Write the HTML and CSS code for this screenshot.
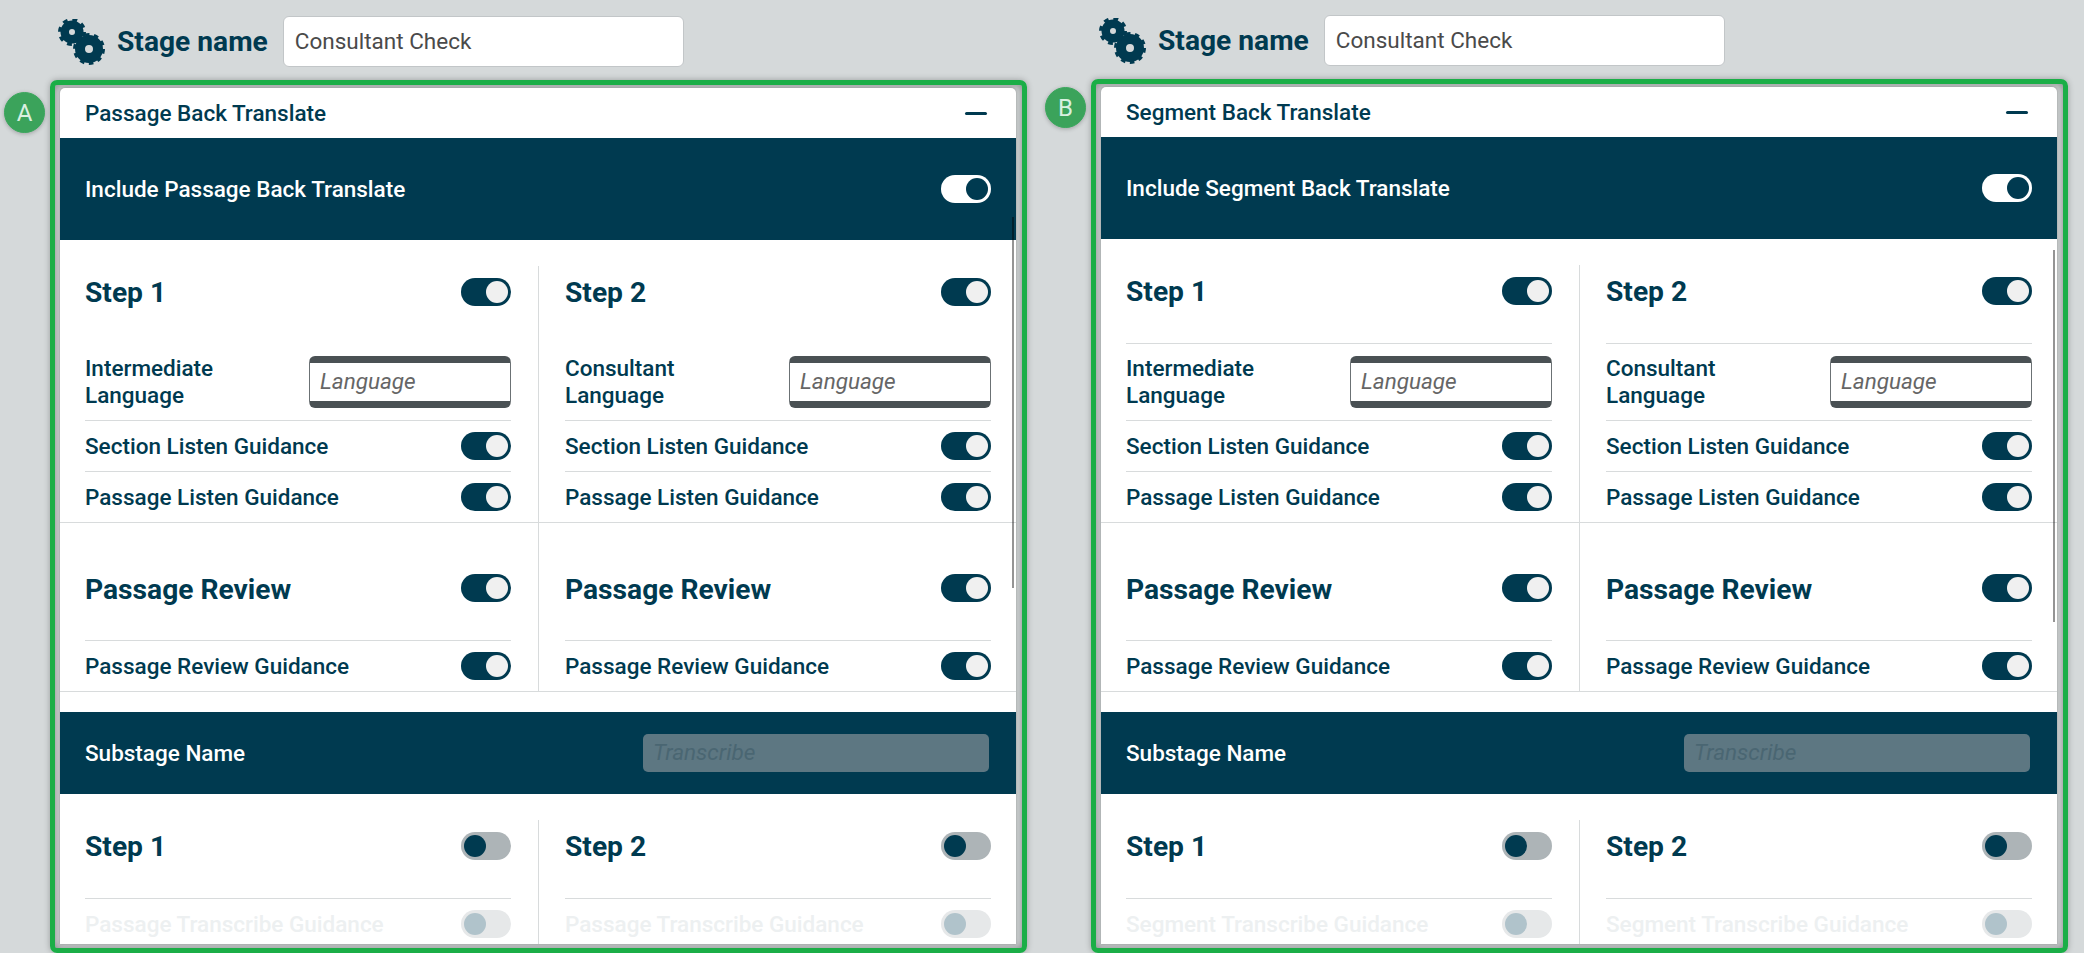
FILE: index.html
```html
<!DOCTYPE html>
<html lang="en">
<head>
<meta charset="utf-8">
<title>Stage comparison</title>
<link rel="stylesheet" href="styles.css">
</head>
<body>
<main class="stages">
  <section class="stage">
    <header class="stage-head">
      <svg class="gears" viewBox="0 0 47 46" aria-hidden="true"><g fill="none" stroke="#003a50"><circle cx="14" cy="13" r="7.25" stroke-width="8.5"/><circle cx="14" cy="13" r="12" stroke-width="4" stroke-dasharray="4.7 4.72"/><circle cx="31" cy="30" r="9" stroke-width="10"/><circle cx="31" cy="30" r="14" stroke-width="4" stroke-dasharray="4.4 4.4"/></g></svg>
      <h1 class="stage-title">Stage name</h1>
      <input class="stage-input" value="Consultant Check">
    </header>
    <span class="badge">A</span>
    <div class="frame">
      <div class="panel">
        <span class="scrollbar"></span>
        <div class="panel-title"><span>Passage Back Translate</span><i class="minus"></i></div>
        <div class="band band-main"><span>Include Passage Back Translate</span><i class="toggle invert"></i></div>
        <div class="grid">
          <div class="cell">
            <div class="row step bare"><h2>Step 1</h2><i class="toggle"></i></div>
            <div class="row lang"><span class="wrap">Intermediate Language</span><input class="lang-input" placeholder="Language"></div>
            <div class="row"><span>Section Listen Guidance</span><i class="toggle"></i></div>
            <div class="row last"><span>Passage Listen Guidance</span><i class="toggle"></i></div>
          </div>
          <div class="cell">
            <div class="row step bare"><h2>Step 2</h2><i class="toggle"></i></div>
            <div class="row lang"><span class="wrap">Consultant Language</span><input class="lang-input" placeholder="Language"></div>
            <div class="row"><span>Section Listen Guidance</span><i class="toggle"></i></div>
            <div class="row last"><span>Passage Listen Guidance</span><i class="toggle"></i></div>
          </div>
        </div>
        <div class="grid review">
          <div class="cell">
            <div class="row big"><h2>Passage Review</h2><i class="toggle"></i></div>
            <div class="row last"><span>Passage Review Guidance</span><i class="toggle"></i></div>
          </div>
          <div class="cell">
            <div class="row big"><h2>Passage Review</h2><i class="toggle"></i></div>
            <div class="row last"><span>Passage Review Guidance</span><i class="toggle"></i></div>
          </div>
        </div>
        <div class="band band-sub"><span>Substage Name</span><input class="sub-input" placeholder="Transcribe" disabled></div>
        <div class="grid lower">
          <div class="cell">
            <div class="row step low"><h2>Step 1</h2><i class="toggle off"></i></div>
            <div class="row last faint"><span>Passage Transcribe Guidance</span><i class="toggle disabled"></i></div>
          </div>
          <div class="cell">
            <div class="row step low"><h2>Step 2</h2><i class="toggle off"></i></div>
            <div class="row last faint"><span>Passage Transcribe Guidance</span><i class="toggle disabled"></i></div>
          </div>
        </div>
      </div>
    </div>
  </section>

  <section class="stage stage-b">
    <header class="stage-head">
      <svg class="gears" viewBox="0 0 47 46" aria-hidden="true"><g fill="none" stroke="#003a50"><circle cx="14" cy="13" r="7.25" stroke-width="8.5"/><circle cx="14" cy="13" r="12" stroke-width="4" stroke-dasharray="4.7 4.72"/><circle cx="31" cy="30" r="9" stroke-width="10"/><circle cx="31" cy="30" r="14" stroke-width="4" stroke-dasharray="4.4 4.4"/></g></svg>
      <h1 class="stage-title">Stage name</h1>
      <input class="stage-input" value="Consultant Check">
    </header>
    <span class="badge">B</span>
    <div class="frame">
      <div class="panel">
        <span class="scrollbar"></span>
        <div class="panel-title"><span>Segment Back Translate</span><i class="minus"></i></div>
        <div class="band band-main"><span>Include Segment Back Translate</span><i class="toggle invert"></i></div>
        <div class="grid">
          <div class="cell">
            <div class="row step"><h2>Step 1</h2><i class="toggle"></i></div>
            <div class="row lang"><span class="wrap">Intermediate Language</span><input class="lang-input" placeholder="Language"></div>
            <div class="row"><span>Section Listen Guidance</span><i class="toggle"></i></div>
            <div class="row last"><span>Passage Listen Guidance</span><i class="toggle"></i></div>
          </div>
          <div class="cell">
            <div class="row step"><h2>Step 2</h2><i class="toggle"></i></div>
            <div class="row lang"><span class="wrap">Consultant Language</span><input class="lang-input" placeholder="Language"></div>
            <div class="row"><span>Section Listen Guidance</span><i class="toggle"></i></div>
            <div class="row last"><span>Passage Listen Guidance</span><i class="toggle"></i></div>
          </div>
        </div>
        <div class="grid review">
          <div class="cell">
            <div class="row big"><h2>Passage Review</h2><i class="toggle"></i></div>
            <div class="row last"><span>Passage Review Guidance</span><i class="toggle"></i></div>
          </div>
          <div class="cell">
            <div class="row big"><h2>Passage Review</h2><i class="toggle"></i></div>
            <div class="row last"><span>Passage Review Guidance</span><i class="toggle"></i></div>
          </div>
        </div>
        <div class="band band-sub"><span>Substage Name</span><input class="sub-input" placeholder="Transcribe" disabled></div>
        <div class="grid lower">
          <div class="cell">
            <div class="row step low"><h2>Step 1</h2><i class="toggle off"></i></div>
            <div class="row last faint"><span>Segment Transcribe Guidance</span><i class="toggle disabled"></i></div>
          </div>
          <div class="cell">
            <div class="row step low"><h2>Step 2</h2><i class="toggle off"></i></div>
            <div class="row last faint"><span>Segment Transcribe Guidance</span><i class="toggle disabled"></i></div>
          </div>
        </div>
      </div>
    </div>
  </section>
</main>
</body>
</html>
```
FILE: styles.css
```css
* { box-sizing: border-box; }
html, body { height: 100%; }
body {
  margin: 0;
  overflow: hidden;
  background: #d5d9da;
  color: #003a50;
  font-family: Roboto, "Liberation Sans", sans-serif;
  font-size: 22.5px;
  font-weight: 500;
}
.stages {
  display: flex;
  gap: 64px;
  height: 953px;
  padding-left: 50px;
}
.stage {
  position: relative;
  display: flex;
  flex-direction: column;
  width: 977px;
}
.stage-b { margin-top: -1px; }
.stage-head {
  display: flex;
  align-items: center;
  flex: 0 0 80px;
  padding: 0 0 0 8px;
}
.gears { width: 47px; height: 46px; flex: none; margin: 3px 12px 0 0; }
.stage-title {
  margin: 3px 15px 0 0;
  font-size: 28.2px;
  font-weight: 700;
  white-space: nowrap;
}
.stage-input {
  width: 401px;
  height: 51px;
  padding: 0 11px 2px;
  margin-top: 3px;
  border: 1px solid #c2c6c8;
  border-radius: 6px;
  background: #fff;
  color: #4a4a4a;
  font: 400 22.5px Roboto, sans-serif;
}
.badge {
  position: absolute;
  left: -46px;
  top: 92px;
  display: flex;
  align-items: center;
  justify-content: center;
  width: 41px;
  height: 41px;
  border: 1px solid #3aa85c;
  border-radius: 50%;
  background: #3ba35b;
  color: #d9f0e0;
  font-size: 24px;
  font-weight: 400;
  box-shadow: 0 1px 4px rgba(0,0,0,.25);
}
.stage-b .badge { top: 88px; }
.frame {
  flex: 1;
  min-height: 0;
  padding: 3px 6px 4px 5px;
  border: 5px solid #1bae47;
  border-radius: 7px;
  box-shadow: 0 0 6px rgba(0,0,0,.28), inset 0 0 8px rgba(0,0,0,.4);
}
.panel {
  position: relative;
  height: 100%;
  overflow: hidden;
  border-radius: 5px 5px 0 0;
  background: #fff;
  box-shadow: 0 0 3px rgba(0,0,0,.3);
}
.scrollbar {
  position: absolute;
  z-index: 2;
  right: 2px;
  top: 129px;
  width: 2px;
  height: 371px;
  background: rgba(0,0,0,.42);
}
.stage-b .scrollbar { top: 163px; height: 372px; }
.panel-title {
  display: flex;
  align-items: center;
  justify-content: space-between;
  height: 50px;
  padding: 0 29px 0 25px;
}
.minus { width: 22px; height: 3px; border-radius: 2px; background: #003a50; }
.band {
  display: flex;
  align-items: center;
  justify-content: space-between;
  padding: 0 25px;
  background: #003a50;
  color: #fff;
}
.band-main { height: 102px; }
.band-sub { height: 82px; margin-top: 20px; padding-right: 27px; }
.grid {
  display: grid;
  grid-template-columns: 479px 1fr;
  padding-top: 26px;
  border-bottom: 1px solid #d8dbdc;
}
.review { padding-top: 0; }
.lower { height: 129px; border-bottom: 0; }
.cell { padding: 0 25px 0 26px; }
.cell:first-child { padding: 0 27px 0 25px; border-right: 1px solid #d8dbdc; }
.row {
  display: flex;
  align-items: center;
  justify-content: space-between;
  height: 51px;
  border-bottom: 1px solid #d8dbdc;
}
.row.last { border-bottom: 0; height: 50px; }
.row h2 { margin: 1px 0 0; font-size: 28.2px; font-weight: 700; line-height: 28px; }
.step { align-items: flex-start; height: 78px; padding-top: 12px; }
.step.bare { border-bottom-color: transparent; }
.step.low { height: 79px; }
.stage-b .step:not(.low) { height: 79px; }
.lang { height: 77px; }
.wrap { width: 150px; line-height: 27px; }
.big { align-items: flex-start; height: 118px; padding-top: 51px; }
.row.big h2 { margin-top: 2px; }
.faint { color: #edf0f1; }
.lang-input {
  width: 202px;
  height: 52px;
  padding: 0 10px 2px;
  border: 1px solid #6b7174;
  border-top: 7px solid #4a5154;
  border-bottom: 7px solid #4a5154;
  border-radius: 6px;
  background: #fff;
  font: italic 400 22.5px Roboto, sans-serif;
}
.lang-input::placeholder { color: #666; opacity: 1; }
.sub-input {
  width: 346px;
  height: 38px;
  padding: 0 10px 2px;
  border: 0;
  border-radius: 5px;
  background: #5d7782;
  font: italic 400 22.5px Roboto, sans-serif;
}
.sub-input::placeholder { color: #4a6672; opacity: 1; }
.toggle {
  position: relative;
  flex: none;
  display: block;
  width: 50px;
  height: 28px;
  border-radius: 14px;
  background: #003a50;
}
.toggle::after {
  content: "";
  position: absolute;
  top: 3px;
  right: 3px;
  width: 22px;
  height: 22px;
  border-radius: 50%;
  background: #f0f0f0;
}
.toggle.invert { background: #fff; }
.toggle.invert::after { background: #003a50; }
.toggle.off { background: #adb4b7; }
.toggle.off::after { right: auto; left: 3px; background: #003a50; }
.toggle.disabled { background: #e6e8e9; }
.toggle.disabled::after { right: auto; left: 3px; background: #b0c3cb; }
```
